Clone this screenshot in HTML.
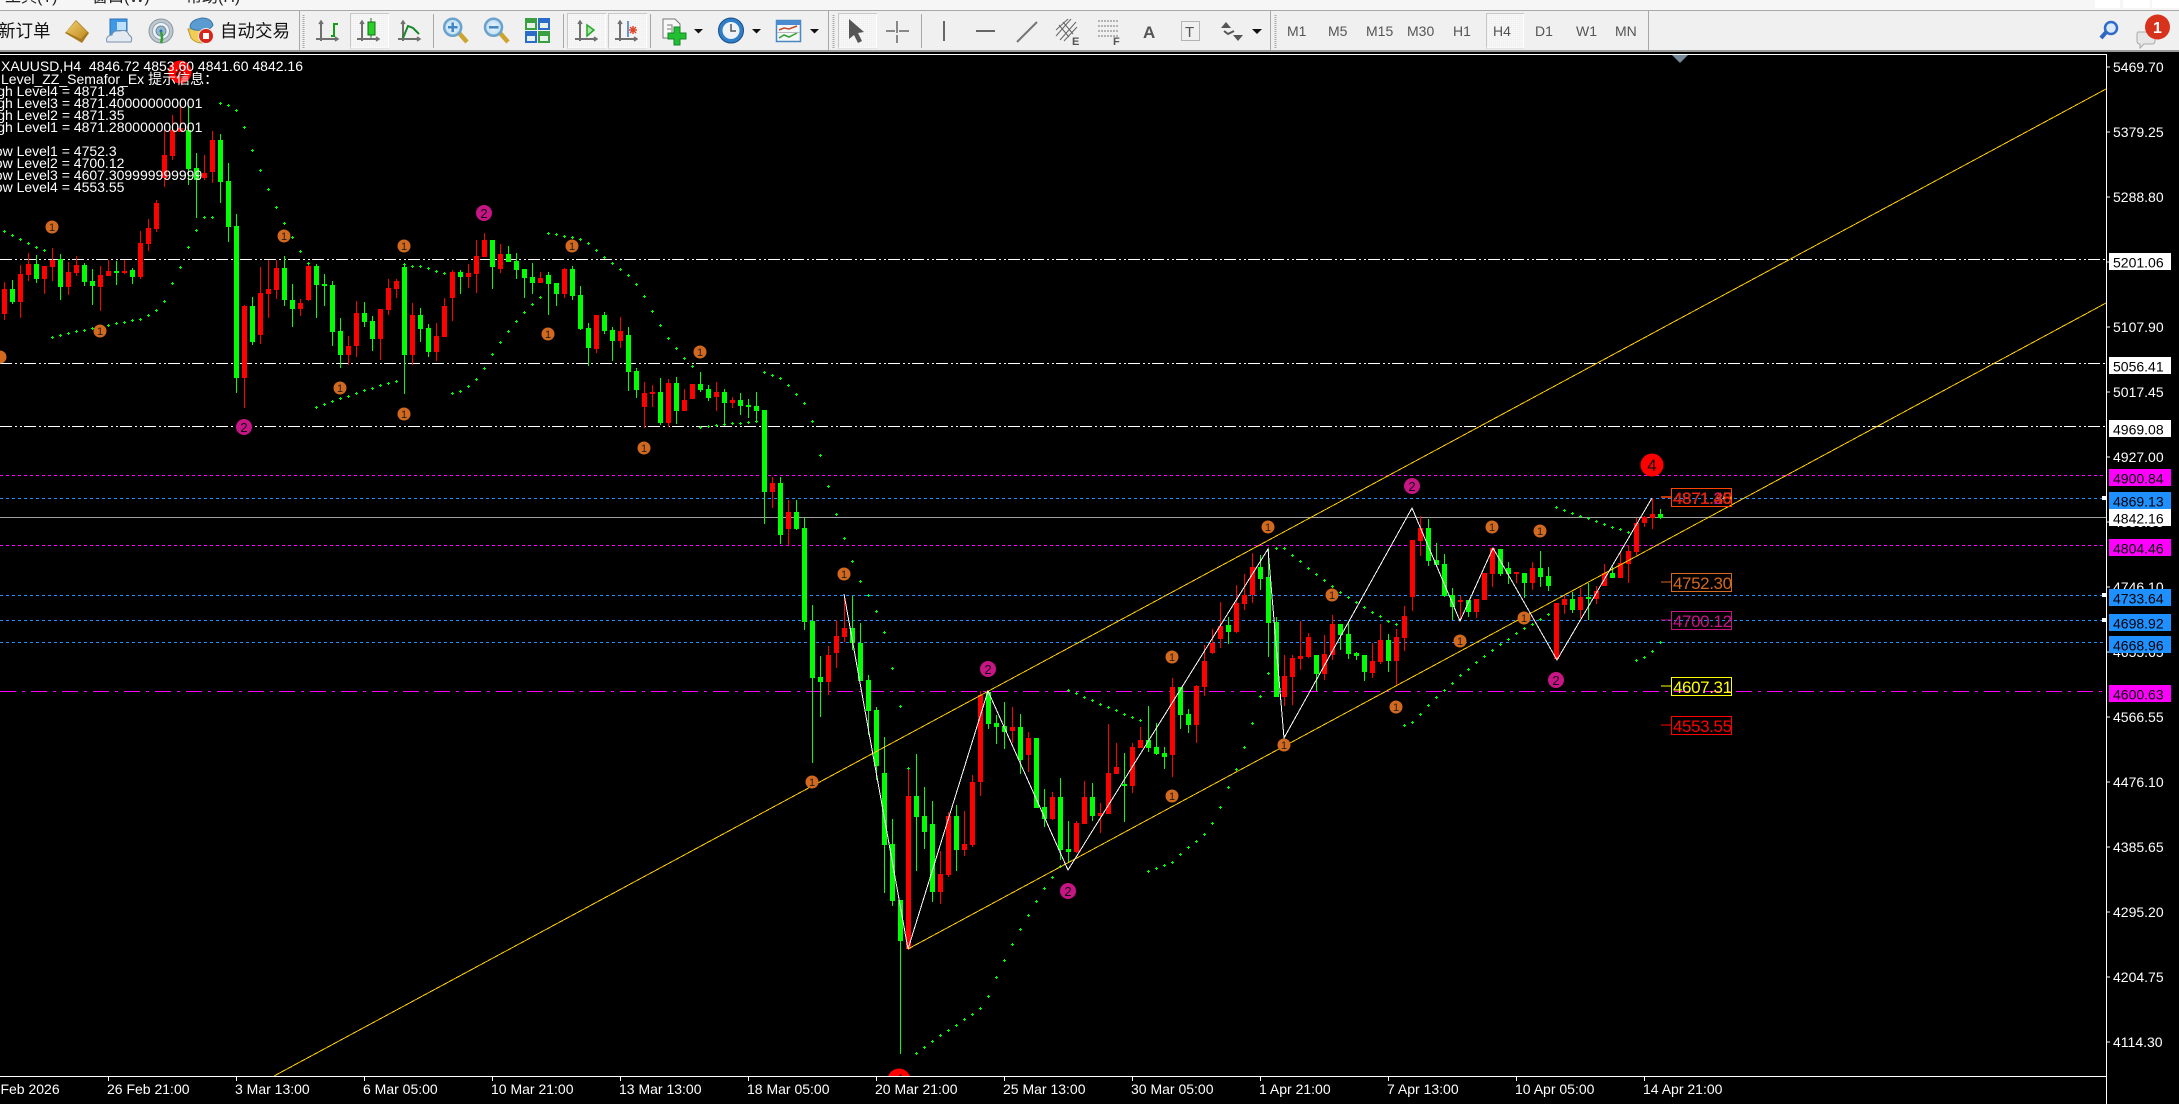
<!DOCTYPE html>
<html lang="zh">
<head>
<meta charset="utf-8">
<title>XAUUSD,H4</title>
<style>
html,body{margin:0;padding:0;background:#000;width:2179px;height:1104px;overflow:hidden}
svg{display:block;position:absolute;left:0;top:0}
text{font-family:"Liberation Sans","Noto Sans CJK SC",sans-serif;font-size:14px}
.tb text{fill:#555}
.w text{fill:#fff}
.ax text{fill:#fff}
.bx text{fill:#000}
.lb text{font-size:17px;letter-spacing:-.4px}
.o circle{fill:#d2691e}
.o text{font-size:11px;fill:#222;text-anchor:middle}
.m circle{fill:#c71585}
.m text{font-size:13px;fill:#111;text-anchor:middle}
</style>
</head>
<body>
<svg width="2179" height="1104" viewBox="0 0 2179 1104" xmlns="http://www.w3.org/2000/svg">
<defs>
<clipPath id="chartclip"><rect x="0" y="55" width="2106" height="1021"/></clipPath>
<g id="ax" fill="none" stroke="#707070" stroke-width="2"><path d="M5 21v20M0 39h22"/><path d="M3 24l2-3 2 3M19 37l3 2-3 2" stroke-width="1.500"/></g>
<pattern id="dith" width="2" height="2" patternUnits="userSpaceOnUse"><rect width="2" height="2" fill="#f2f2f2"/><rect width="1" height="1" fill="#fafafa"/></pattern>
<linearGradient id="gold" x1="0" y1="0" x2="1" y2="1"><stop offset="0" stop-color="#f0cf70"/><stop offset="1" stop-color="#c08a20"/></linearGradient>
<radialGradient id="lens"><stop offset="0" stop-color="#eef7fd"/><stop offset="1" stop-color="#bcdcf2"/></radialGradient>
</defs>

<!-- top menu -->
<rect width="2179" height="11" fill="#f6f6f6"/>
<g fill="#222"><text x="5" y="2" style="font-size:16px">工具(T)</text><text x="92" y="2" style="font-size:16px">窗口(W)</text><text x="186" y="2" style="font-size:16px">帮助(H)</text></g>
<g fill="#fff"><rect x="2095" y="0" width="25" height="8"/><rect x="2123" y="0" width="27" height="8"/><rect x="2152" y="0" width="27" height="8"/></g>
<rect y="10" width="2179" height="1" fill="#a8a8a8"/>
<!-- toolbar -->
<rect y="11" width="2179" height="39" fill="#f0f0f0"/>
<rect y="50" width="2179" height="2" fill="#9a9a9a"/>
<g class="tb">
<text x="-2" y="37" style="font-size:17.5px;fill:#111">新订单</text>
<text x="220" y="37" style="font-size:17.5px;fill:#111">自动交易</text>
</g>
<!-- gold book -->
<polygon points="65,33 76,20 89,33 82,43" fill="#a87a20"/><polygon points="66,32 76,21 87,32 81,39" fill="url(#gold)"/>
<!-- doc + cloud -->
<path d="M110 19h17v20h-17z" fill="#3f98e4" stroke="#2a70b8"/><path d="M117 22h9v8h-9z" fill="#bfe0fa"/>
<path d="M107 42q-2-6 5-7q1-5 8-4q7-2 9 4q4 2 2 7z" fill="#e4eaf2" stroke="#7890ac"/>
<!-- radio -->
<circle cx="161" cy="31" r="12" fill="#c0c8ce" stroke="#8a98a4"/><circle cx="161" cy="31" r="8.500" fill="#eef2f5" stroke="#92a6b6"/><circle cx="161" cy="31" r="5" fill="#9ab8cc" stroke="#6c8aa0"/><circle cx="161" cy="31" r="1.500" fill="#2a70b0"/><path d="M161 32q2 6 0 11" fill="none" stroke="#30a030" stroke-width="2.500"/>
<!-- robot -->
<path d="M188 29l3 9q4 5 11 5l8-6V28z" fill="#f2cd55" stroke="#b8952c"/><path d="M190 27q0-7 12-9q9 0 11 7q-2 5-11 5q-10 1-12-3z" fill="#5a9bd0" stroke="#3a78ac"/>
<circle cx="206" cy="36" r="7.500" fill="#d8261c" stroke="#eee"/><rect x="203" y="33" width="6" height="6" fill="#fff"/>
<!-- grips & separators -->
<g stroke="#a8a8a8" stroke-width="1" fill="none">
<path d="M299.500 11v39M828.500 11v39M1270.500 11v39M1648.500 11v39M433.500 14v34M563.500 14v34M650.500 14v34M921.500 14v34"/>
<path d="M303.500 15v33M833.500 15v33M1275.500 15v33" stroke-dasharray="1 1" stroke-width="2"/>
</g>
<!-- pressed buttons -->
<g fill="url(#dith)" stroke="#c8c8c8"><rect x="350.500" y="13.500" width="38" height="35"/><rect x="567.500" y="13.500" width="38" height="35"/><rect x="608.500" y="13.500" width="38" height="35"/><rect x="838.500" y="13.500" width="38" height="35"/><rect x="1486.500" y="13.500" width="37" height="35"/></g>
<path d="M388.500 14v34h-38M605.500 14v34h-38M646.500 14v34h-38M876.500 14v34h-38M1523.500 14v34h-37" fill="none" stroke="#fff"/>
<!-- chart-type icons -->
<use href="#ax" x="316"/><path d="M331 36h3V24h4" fill="none" stroke="#12a012" stroke-width="2"/>
<use href="#ax" x="357"/><path d="M371 18v20" stroke="#178017"/><rect x="368" y="22" width="7" height="13" fill="#28d028" stroke="#157015"/>
<use href="#ax" x="398"/><path d="M403 38l5-12 5 2 6 6" fill="none" stroke="#18882a" stroke-width="2"/>
<!-- zoom in/out -->
<path d="M459 33l8 9" stroke="#cba52f" stroke-width="4.500"/><circle cx="452.700" cy="27.300" r="8.500" fill="url(#lens)" stroke="#6aa2cc" stroke-width="2.500"/><path d="M448 27.300h9.500M452.700 22.500v9.500" stroke="#3f86c4" stroke-width="2.500"/>
<path d="M500 33l8 9" stroke="#cba52f" stroke-width="4.500"/><circle cx="493.500" cy="27.300" r="8.500" fill="url(#lens)" stroke="#6aa2cc" stroke-width="2.500"/><path d="M489 27.300h9.500" stroke="#3f86c4" stroke-width="2.500"/>
<!-- grid -->
<g><rect x="525" y="18" width="12" height="12" fill="#38a040"/><rect x="538" y="18" width="12" height="12" fill="#2a6cc8"/><rect x="525" y="31" width="12" height="12" fill="#2a6cc8"/><rect x="538" y="31" width="12" height="12" fill="#38a040"/><g fill="#e8f0ea"><rect x="527" y="23" width="8" height="5"/><rect x="540" y="23" width="8" height="5"/><rect x="527" y="36" width="8" height="5"/><rect x="540" y="36" width="8" height="5"/></g></g>
<!-- auto-scroll / shift -->
<use href="#ax" x="575"/><polygon points="587,25 594,30 587,36" fill="#a8e8a8" stroke="#28a828" stroke-width="1.500"/>
<use href="#ax" x="615"/><path d="M628 21v16" stroke="#3a78c0" stroke-width="1.500"/><path d="M629 30h8M633 26v8M630 27l6 6M636 27l-6 6" stroke="#e0482a" stroke-width="1.500"/>
<!-- new chart -->
<path d="M663 19h12l5 5v14h-17z" fill="#f8f8f8" stroke="#777"/><path d="M667 25h5v8M667 29h4" stroke="#777" fill="none"/>
<path d="M674 28h6v6h6v6h-6v6h-6v-6h-6v-6h6z" fill="#22c030" stroke="#14862a" transform="translate(0 -1)"/>
<polygon points="694,29 703,29 698.500,33.500" fill="#111"/>
<!-- clock -->
<circle cx="731" cy="30.500" r="12.500" fill="#2f7ec8" stroke="#1a4d88"/><circle cx="731" cy="30.500" r="8.500" fill="#eef3f7"/><path d="M731 24v7h5" fill="none" stroke="#555" stroke-width="1.500"/>
<polygon points="752,29 761,29 756.500,33.500" fill="#111"/>
<!-- indicator -->
<rect x="776.500" y="20.500" width="24" height="21" fill="#f4f6f8" stroke="#4a88c4" stroke-width="1.500"/><rect x="777" y="21" width="23" height="4" fill="#4a8ad0"/><path d="M779 30l5-2 5 1 8-3" stroke="#c84828" fill="none" stroke-width="1.500"/><path d="M779 38l5-3 5 2 8-4" stroke="#30a030" fill="none" stroke-width="1.500"/><path d="M777 32.500h23" stroke="#bbb"/>
<polygon points="810,29 819,29 814.500,33.500" fill="#111"/>
<!-- tools -->
<path d="M849 19v20l5-4 4 8 4-2-4-8 6-1z" fill="#555"/>
<path d="M897 21v12M897 35v8M886 31h9M899 31h10" stroke="#666" stroke-width="1.500"/>
<path d="M944 21v20" stroke="#666" stroke-width="2"/>
<path d="M976 31h19" stroke="#666" stroke-width="2"/>
<path d="M1017 42l20-20" stroke="#777" stroke-width="2"/>
<path d="M1056 36l15-17M1060 40l16-18M1056 30l12-11M1064 41l13-14M1059 25l10 12M1063 22l10 12" stroke="#666" fill="none"/>
<text x="1072" y="45" style="font-size:11px;fill:#555;font-weight:bold">E</text>
<path d="M1098 21h21M1098 26h21M1098 31h21M1098 36h21" stroke="#777" stroke-dasharray="2 1" fill="none"/>
<text x="1113" y="45" style="font-size:11px;fill:#555;font-weight:bold">F</text>
<text x="1143" y="38" style="font-size:17px;fill:#555;font-weight:bold">A</text>
<rect x="1181.500" y="21.500" width="18" height="19" fill="none" stroke="#777" stroke-dasharray="1 1"/>
<text x="1185" y="37" style="font-size:15px;fill:#555">T</text>
<polygon points="1226,22 1231,28 1221,28" fill="#555"/><polygon points="1238,41 1233,35 1243,35" fill="#555"/><path d="M1224 31l4 3 6-3" fill="none" stroke="#555" stroke-width="2"/>
<polygon points="1252,29 1262,29 1257,34" fill="#111"/>
<g class="tb">
<text x="1287" y="36">M1</text><text x="1328" y="36">M5</text><text x="1366" y="36">M15</text><text x="1407" y="36">M30</text><text x="1453" y="36">H1</text><text x="1493" y="36">H4</text><text x="1535" y="36">D1</text><text x="1576" y="36">W1</text><text x="1615" y="36">MN</text>
</g>
<!-- search / message -->
<path d="M2101 38l7-8" stroke="#2f66c0" stroke-width="4"/><circle cx="2111" cy="28" r="6" fill="#dceaf8" stroke="#2f6cc8" stroke-width="2.500"/>
<path d="M2138 32h14q3 0 3 3v6q0 3-3 3h-8l-4 4v-4q-3 0-3-3v-6q0-3 1-3z" fill="#e6e6e6" stroke="#aaa"/>
<circle cx="2157.500" cy="27" r="12.500" fill="#d8321c"/><text x="2157.500" y="33" style="font-size:16px;fill:#fff;font-weight:bold" text-anchor="middle">1</text>

<!-- chart frame -->
<rect y="52" width="2179" height="1052" fill="#000"/>
<rect x="0" y="54" width="2107" height="1" fill="#fff"/>
<polygon points="1672,55 1688,55 1680,63" fill="#778899"/>

<!-- axis labels (behind boxes) -->
<g class="ax">
<text x="2113" y="72">5469.70</text><text x="2113" y="137">5379.25</text><text x="2113" y="202">5288.80</text><text x="2113" y="267">5198.35</text><text x="2113" y="332">5107.90</text><text x="2113" y="397">5017.45</text><text x="2113" y="462">4927.00</text><text x="2113" y="527">4836.55</text><text x="2113" y="592">4746.10</text><text x="2113" y="657">4655.65</text><text x="2113" y="722">4566.55</text><text x="2113" y="787">4476.10</text><text x="2113" y="852">4385.65</text><text x="2113" y="917">4295.20</text><text x="2113" y="982">4204.75</text><text x="2113" y="1047">4114.30</text>
</g>
<path d="M2106 67h4M2106 132h4M2106 197h4M2106 262h4M2106 327h4M2106 392h4M2106 457h4M2106 522h4M2106 587h4M2106 652h4M2106 717h4M2106 782h4M2106 847h4M2106 912h4M2106 977h4M2106 1042h4" stroke="#fff"/>

<!-- horizontal lines -->
<g clip-path="url(#chartclip)" fill="none" shape-rendering="crispEdges">
<g stroke="#fff" stroke-dasharray="12 3 2 3 2 2"><path d="M0 259.500H2106M0 363.500H2106M0 426.500H2106"/></g>
<g stroke="#ff00ff" stroke-dasharray="3 3"><path d="M0 475.500H2106M0 545.500H2106"/></g>
<g stroke="#1e90ff" stroke-dasharray="3 3"><path d="M0 498.500H2106M0 595.500H2106M0 620.500H2106M0 642.500H2106"/></g>
<path d="M0 517.500H2106" stroke="#a0a0a0"/>
<path d="M0 691.500H2106" stroke="#ff00ff" stroke-dasharray="16 6 3 6" />
</g>

<!-- candles -->
<g clip-path="url(#chartclip)" shape-rendering="crispEdges">
<path id="cg" fill="#00ff00"/>
<path id="cr" fill="#ff0000"/>
<path id="dots" fill="#00ff00"/>
</g>

<!-- trend lines + zigzag -->
<g clip-path="url(#chartclip)" fill="none" shape-rendering="crispEdges">
<path d="M274 1076L2106 89" stroke="#ffcc00"/>
<path d="M908 949L2106 303" stroke="#ffcc00"/>
<path d="M844 594L908 949L988 691L1068 870L1268 549L1284 738L1412 508L1460 621L1493 548L1557 660L1652 498" stroke="#fff"/>
</g>

<!-- semafor -->
<g class="o" clip-path="url(#chartclip)">
<circle cx="52" cy="227" r="6.500"/><text x="52" y="231">1</text>
<circle cx="100" cy="331" r="6.500"/><text x="100" y="335">1</text>
<circle cx="284" cy="236" r="6.500"/><text x="284" y="240">1</text>
<circle cx="404" cy="246" r="6.500"/><text x="404" y="250">1</text>
<circle cx="340" cy="388" r="6.500"/><text x="340" y="392">1</text>
<circle cx="404" cy="414" r="6.500"/><text x="404" y="418">1</text>
<circle cx="572" cy="246" r="6.500"/><text x="572" y="250">1</text>
<circle cx="548" cy="334" r="6.500"/><text x="548" y="338">1</text>
<circle cx="700" cy="352" r="6.500"/><text x="700" y="356">1</text>
<circle cx="644" cy="448" r="6.500"/><text x="644" y="452">1</text>
<circle cx="0" cy="357" r="6.500"/>
<circle cx="844" cy="574" r="6.500"/><text x="844" y="578">1</text>
<circle cx="812" cy="782" r="6.500"/><text x="812" y="786">1</text>
<circle cx="1172" cy="657" r="6.500"/><text x="1172" y="661">1</text>
<circle cx="1172" cy="796" r="6.500"/><text x="1172" y="800">1</text>
<circle cx="1284" cy="745" r="6.500"/><text x="1284" y="749">1</text>
<circle cx="1332" cy="595" r="6.500"/><text x="1332" y="599">1</text>
<circle cx="1396" cy="707" r="6.500"/><text x="1396" y="711">1</text>
<circle cx="1460" cy="641" r="6.500"/><text x="1460" y="645">1</text>
<circle cx="1268" cy="527" r="6.500"/><text x="1268" y="531">1</text>
<circle cx="1492" cy="527" r="6.500"/><text x="1492" y="531">1</text>
<circle cx="1540" cy="531" r="6.500"/><text x="1540" y="535">1</text>
<circle cx="1524" cy="618" r="6.500"/><text x="1524" y="622">1</text>
</g>
<g class="m">
<circle cx="484" cy="213" r="8"/><text x="484" y="218">2</text>
<circle cx="244" cy="427" r="8"/><text x="244" y="432">2</text>
<circle cx="988" cy="669" r="8"/><text x="988" y="674">2</text>
<circle cx="1068" cy="891" r="8"/><text x="1068" y="896">2</text>
<circle cx="1412" cy="486" r="8"/><text x="1412" y="491">2</text>
<circle cx="1556" cy="680" r="8"/><text x="1556" y="685">2</text>
</g>
<g clip-path="url(#chartclip)">
<circle cx="180" cy="72" r="11.500" fill="#f00"/><text x="180" y="78" style="font-size:17px;fill:#111" text-anchor="middle">4</text>
<circle cx="899" cy="1080" r="11.500" fill="#f00"/><text x="899" y="1086" style="font-size:17px;fill:#111" text-anchor="middle">4</text>
<circle cx="1652" cy="465" r="11.500" fill="#f00"/><text x="1652" y="471" style="font-size:17px;fill:#111" text-anchor="middle">4</text>
</g>

<!-- right price tags on chart -->
<g class="lb" fill="none">
<path d="M1661 497h10" stroke="#ff4500" stroke-width="1.500"/><rect x="1671.500" y="488.500" width="60" height="18" stroke="#ff4500"/>
<text x="1673" y="504" fill="#d2691e">4871.35</text><text x="1673" y="504" fill="#c71585">4871.28</text><text x="1673" y="504" fill="#ffcc00">4871.40</text><text x="1673" y="504" fill="#f01010">4871.48</text>
<path d="M1661 582h10" stroke="#d2691e"/><rect x="1671.500" y="573.500" width="60" height="18" stroke="#d2691e"/><text x="1673" y="589" fill="#d2691e">4752.30</text>
<path d="M1661 620h10" stroke="#c71585"/><rect x="1671.500" y="611.500" width="60" height="18" stroke="#c71585"/><text x="1673" y="627" fill="#c71585">4700.12</text>
<path d="M1661 686h10" stroke="#ffff00"/><rect x="1671.500" y="677.500" width="60" height="18" stroke="#ffff00"/><text x="1673" y="693" fill="#ffff00">4607.31</text>
<path d="M1661 725h10" stroke="#ff0000"/><rect x="1671.500" y="716.500" width="60" height="18" stroke="#ff0000"/><text x="1673" y="732" fill="#ff0000">4553.55</text>
</g>

<!-- info text -->
<g class="w">
<text x="1" y="71" xml:space="preserve">XAUUSD,H4  4846.72 4853.60 4841.60 4842.16</text>
<text x="1" y="84">Level_ZZ_Semafor_Ex 提示信息：</text>
<text x="-16" y="96">High Level4 = 4871.48</text>
<text x="-16" y="108">High Level3 = 4871.400000000001</text>
<text x="-16" y="120">High Level2 = 4871.35</text>
<text x="-16" y="132">High Level1 = 4871.280000000001</text>
<text x="-13" y="156">Low Level1 = 4752.3</text>
<text x="-13" y="168">Low Level2 = 4700.12</text>
<text x="-13" y="180">Low Level3 = 4607.309999999999</text>
<text x="-13" y="192">Low Level4 = 4553.55</text>
</g>

<!-- axes -->
<rect x="2106" y="54" width="1" height="1050" fill="#fff"/>
<rect x="0" y="1076" width="2107" height="1" fill="#fff"/>
<path d="M108.500 1077v4M236.500 1077v4M364.500 1077v4M492.500 1077v4M620.500 1077v4M748.500 1077v4M876.500 1077v4M1004.500 1077v4M1132.500 1077v4M1260.500 1077v4M1388.500 1077v4M1516.500 1077v4M1644.500 1077v4" stroke="#fff"/>
<g class="ax">
<text x="-19" y="1094">24 Feb 2026</text>
<text x="107" y="1094">26 Feb 21:00</text><text x="235" y="1094">3 Mar 13:00</text><text x="363" y="1094">6 Mar 05:00</text><text x="491" y="1094">10 Mar 21:00</text><text x="619" y="1094">13 Mar 13:00</text><text x="747" y="1094">18 Mar 05:00</text><text x="875" y="1094">20 Mar 21:00</text><text x="1003" y="1094">25 Mar 13:00</text><text x="1131" y="1094">30 Mar 05:00</text><text x="1259" y="1094">1 Apr 21:00</text><text x="1387" y="1094">7 Apr 13:00</text><text x="1515" y="1094">10 Apr 05:00</text><text x="1643" y="1094">14 Apr 21:00</text>
</g>

<!-- axis tag boxes -->
<g class="bx">
<rect x="2109" y="253" width="62" height="17" fill="#fff"/><text x="2113" y="267.500">5201.06</text>
<rect x="2109" y="357" width="62" height="17" fill="#fff"/><text x="2113" y="371.500">5056.41</text>
<rect x="2109" y="420" width="62" height="17" fill="#fff"/><text x="2113" y="434.500">4969.08</text>
<rect x="2109" y="469" width="62" height="17" fill="#ff00ff"/><text x="2113" y="483.500">4900.84</text>
<rect x="2109" y="492" width="62" height="17" fill="#1e90ff"/><text x="2113" y="506.500">4869.13</text>
<rect x="2109" y="509" width="62" height="17" fill="#fff"/><text x="2113" y="523.500">4842.16</text>
<rect x="2109" y="539" width="62" height="17" fill="#ff00ff"/><text x="2113" y="553.500">4804.46</text>
<rect x="2109" y="589" width="62" height="17" fill="#1e90ff"/><text x="2113" y="603.500">4733.64</text>
<rect x="2109" y="614" width="62" height="17" fill="#1e90ff"/><text x="2113" y="628.500">4698.92</text>
<rect x="2109" y="636" width="62" height="17" fill="#1e90ff"/><text x="2113" y="650.500">4668.96</text>
<rect x="2109" y="685" width="62" height="17" fill="#ff00ff"/><text x="2113" y="699.500">4600.63</text>
</g>
<g fill="#fff"><rect x="2102" y="496" width="4" height="4"/><rect x="2102" y="593" width="4" height="4"/><rect x="2102" y="618" width="4" height="4"/></g>
</svg>
<script>
(function(){
var G='g',R='r';
function seg(y0,s,list){return list.map(function(a){return [a[0],a[1],y0+a[2]*s,y0+a[3]*s,y0+a[4]*s,y0+a[5]*s];});}
var z4=[[0,R,245,267,342,360],[1,G,240,267,305,312],[2,R,195,222,305,353],[3,R,160,192,225,242],[4,G,165,192,237,248],[5,R,198,198,237,282],[6,R,145,180,201,242],[7,G,163,178,261,300],[8,R,186,216,261,285],[9,R,168,195,219,228],[10,G,190,195,246,258],[11,G,207,243,258,315],[12,R,198,225,261,333],[13,R,180,213,228,228],[14,G,183,213,219,255],[15,R,180,213,219,222],[16,G,204,210,231,252],[17,R,94,129,231,237],[18,R,57,84,132,153],
[30,R,316,319,533,623],[31,G,291,318,426,435],[32,R,201,279,405,432],[33,R,180,267,282,354],[34,R,180,204,270,297],[35,G,168,204,300,318],[36,G,252,300,327,381],[37,R,297,309,327,348],[38,R,186,198,300,303],[39,G,192,198,255,354],[40,G,222,252,258,318],[41,G,243,255,396,438],[42,G,354,393,465,504],[43,R,408,438,465,495],[44,R,303,339,438,471],[45,G,306,339,366,380],[46,G,348,363,417,453],[47,R,327,327,417,480],[48,R,237,264,330,345],[49,R,237,243,267,294],[50,G,195,201,465,582],[51,R,309,345,465,495],[52,G,324,345,387,426],[53,G,372,384,456,471],[54,R,369,408,456,483],[55,R,294,318,411,411],[56,R,210,216,294,363],[57,G,210,216,231,282],[58,R,192,219,231,264],[59,R,120,168,222,279],[60,R,99,120,171,172],[61,G,120,120,201,267],[62,R,132,162,207,219],[63,G,138,162,186,186],[64,G,160,183,210,237],[65,G,207,207,234,294],[66,G,189,231,249,282],[67,R,216,234,249,249],[68,G,216,225,252,345],[69,G,249,249,282,318],[70,R,204,207,282,294],[71,G,198,207,288,300],[72,G,258,285,387,390],[73,G,369,384,444,498],[74,R,345,345,447,459],[75,G,336,345,393,402],[76,G,381,390,423,483],[77,R,351,393,423,444],[78,G,381,405,516,573],[79,G,504,513,570,594],[80,R,546,579,621,684],[81,R,555,576,582,621],[82,G,534,576,669,675],[83,R,537,549,669,681],[84,G,531,549,633,672],[85,R,567,600,633,633],[86,R,552,552,597,597],[87,G,516,552,570,576],[88,G,555,567,594,603],[89,R,546,576,591,633],[90,G,567,576,609,675],[91,R,591,600,609,624],[92,G,579,600,618,645],[93,G,597,615,621,654],[94,G,576,618,633,663],[95,G,630,630,876,972],[96,R,831,849,876,924],[97,G,831,849,1005,1032],[98,R,900,936,987,1035],[99,G,900,936,987,990]];
var abs=[[19,R,200,203,229,232],[20,R,130,155,178,187],[21,R,115,130,156,160],[22,R,107,128,132,132],[23,G,107,130,169,185],[24,G,153,168,180,218],[25,R,155,173,178,180],[26,R,131,140,172,183],[27,G,134,140,182,203],[28,G,163,181,227,242],[29,G,214,226,378,393],[100,G,518,528,622,630]];
var z10=[[101,G,135,183,353,608],[102,G,288,351,365,470],[103,R,258,285,365,405],[104,R,180,228,279,324],[105,R,105,204,231,246],[106,G,108,204,250,270],[107,G,190,249,362,360],[108,G,345,360,453,525],[109,G,440,450,618,660],[110,G,530,639,855,1000],[111,G,777,852,1023,1038],[112,G,1020,1020,1143,1481],[113,R,625,708,1168,1170],[114,G,582,708,771,932],[115,G,681,768,816,867],[116,G,723,792,996,1026],[117,R,873,942,996,1032],[118,R,755,768,945,950],[119,G,735,768,870,933],[120,R,753,852,870,888],[121,R,645,666,855,862],[122,R,394,404,666,708],[123,G,396,396,492,507],[124,G,465,489,501,552],[125,G,426,498,516,567],[126,R,441,501,513,550],[127,G,462,501,600,642],[128,R,516,534,585,636],[129,G,534,534,744,744],[130,G,687,741,777,801],[131,R,696,711,777,780],[132,G,654,711,870,900],[133,G,783,867,876,906],[134,R,783,789,876,880],[135,R,663,711,792,792],[136,G,669,711,768,783],[137,R,729,759,768,819],[138,R,492,639,762,762],[139,R,549,621,642,642],[140,G,579,672,678,786],[141,R,549,561,678,700],[142,R,501,540,564,564],[143,G,438,540,564,576],[144,G,489,561,582,585],[145,G,561,579,591,627],[146,R,354,381,585,651],[147,G,381,381,465,507],[148,G,447,462,495,519],[149,R,375,378,495,549]];
var z6=[[150,R,615,663,741,768],[151,R,567,610,640,642],[152,R,486,558,597,624],[153,G,530,555,576,612],[154,R,435,489,576,580],[155,R,402,465,492,510],[156,R,340,381,465,489],[157,G,345,381,417,450],[158,G,326,411,549,650],[159,G,530,546,771,771],[160,R,645,708,771,798],[161,R,645,654,711,795],[162,R,543,648,657,690],[163,R,579,591,651,654],[164,G,645,645,702,754],[165,R,585,642,702,720],[166,R,525,552,645,660],[167,G,552,552,585,630],[168,G,546,582,642,657],[169,G,636,639,648,660],[170,G,645,645,696,723],[171,R,609,663,699,714],[172,R,552,600,666,672],[173,G,582,600,663,696],[174,R,567,591,663,738],[175,R,498,528,594,633],[176,R,300,300,470,513],[177,R,228,264,303,348],[178,G,237,264,363,378],[179,G,309,360,375,375],[180,G,342,372,468,470],[181,G,444,465,501,540],[182,R,468,480,486,540],[183,G,480,480,516,530],[184,R,477,477,516,534],[185,R,399,399,480,480],[186,R,325,325,402,441],[187,G,327,327,402,408],[188,G,366,384,402,432],[189,R,396,396,402,430],[190,G,399,399,429,474],[191,R,366,384,429,450],[192,G,333,384,411,441],[193,G,381,408,438,453],[194,R,489,489,657,660],[195,R,465,477,495,522],[196,G,456,477,510,519],[197,R,444,471,510,534],[198,G,429,471,477,540],[199,R,438,453,477,492],[200,R,372,399,438,438],[201,G,380,399,414,415],[202,R,339,369,414,414],[203,R,315,333,372,429],[204,R,235,249,336,345],[205,R,228,231,249,261],[206,R,174,222,233,267],[207,G,207,222,234,237]];
var all=seg(200,1/3,z4).concat(seg(0,1,abs),seg(560,1/3,z10),seg(440,1/3,z6));
var pg='',pr='';
all.forEach(function(a){
  var c=8*a[0]+4,wt=Math.round(a[2]),bt=Math.round(a[3]),bb=Math.round(a[4]),wb=Math.round(a[5]);
  if(wb<bb)wb=bb; if(wt>bt)wt=bt; if(bb<=bt)bb=bt+1;
  var s='M'+c+' '+wt+'h1v'+(wb-wt)+'h-1zM'+(c-2)+' '+bt+'h5v'+(bb-bt)+'h-5z';
  if(a[1]==G)pg+=s;else pr+=s;
});
document.getElementById('cg').setAttribute('d',pg);
document.getElementById('cr').setAttribute('d',pr);
var d='';
function dots(k,y0,s,list){list.forEach(function(v,i){var c=8*(k+i)+4,y=Math.round(y0+v*s);d+='M'+(c-1)+' '+y+'h3v1h-3zM'+c+' '+(y-1)+'h1v3h-1z';});}
dots(0,200,1/3,[94,106,118,130,142,151]);
dots(6,200,1/3,[412,406,400,394,391,385,382,376,370,367,361,358,346,331,304,250,202,142,91,52,52]);
dots(27,0,1/3,[310,316,331,382,451,511,568,622]);
dots(35,200,1/3,[70,112,154,190]);
dots(39,200,1/3,[622,613,604,595,589,580,571,565,556,550,544]);
dots(50,200,1/3,[193,199,199,205,214,220]);
dots(56,200,1/3,[580,574,559,538,505,463,427,394,364,337,313,292]);
dots(68,200,1/3,[100,103,109,112,118,130,151,172,190,208,226,253,289,334,376,415,445,475,499]);
dots(87,200,1/3,[682,679,676,673,670,670,667,664]);
dots(95,200,1/3,[517,526,535,556,583,610,664,766,859,943,1015]);
dots(106,0,1,[561,581,595,611,632,668,706,768]);
dots(114,560,1/2.877,[1419,1402,1385,1367,1353,1337,1321,1306,1290,1255,1200,1152,1105,1062,1021,981,945,912,881]);
dots(133,560,1/3,[391,400,412,421,433,442,451,463,472,481]);
dots(143,560,1/2.877,[895,886,878,869,846,825,808,788,757,711,653,601,537,468,390,325]);
dots(159,440,1/3,[325,325,346,364,385,403,421,439,457,472,487,502,517,529,544,553]);
dots(175,440,1/3,[856,847,823,796,772,751,730,706,688,667,649,631,613,598,580,565,553,538,523]);
dots(194,440,1/3,[202,211,220,229,235,244,253,262,268,277]);
dots(204,440,1/3,[661,652,634,607]);
document.getElementById('dots').setAttribute('d',d);
})();
</script>
</body>
</html>
